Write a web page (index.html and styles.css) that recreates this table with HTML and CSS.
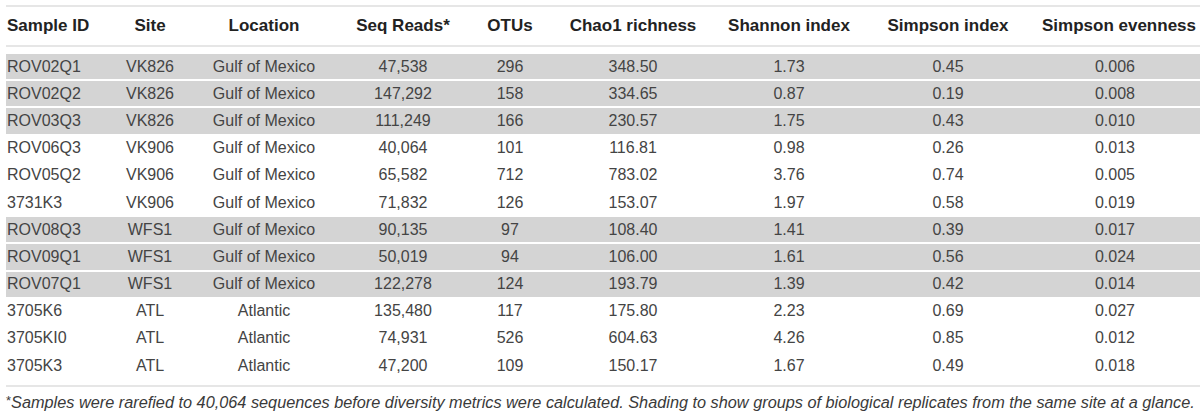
FILE: index.html
```html
<!DOCTYPE html>
<html lang="en">
<head>
<meta charset="utf-8">
<title>Diversity metrics</title>
<link rel="stylesheet" href="styles.css">
</head>
<body>
<table class="data">
  <colgroup>
    <col class="c1"><col class="c2"><col class="c3"><col class="c4"><col class="c5"><col class="c6"><col class="c7"><col class="c8"><col class="c9">
  </colgroup>
  <thead>
    <tr>
      <th class="first">Sample ID</th>
      <th>Site</th>
      <th>Location</th>
      <th>Seq Reads*</th>
      <th>OTUs</th>
      <th>Chao1 richness</th>
      <th>Shannon index</th>
      <th>Simpson index</th>
      <th class="last">Simpson evenness</th>
    </tr>
  </thead>
  <tbody>
    <tr class="shade"><td class="first">ROV02Q1</td><td>VK826</td><td>Gulf of Mexico</td><td>47,538</td><td>296</td><td>348.50</td><td>1.73</td><td>0.45</td><td class="last">0.006</td></tr>
    <tr class="shade"><td class="first">ROV02Q2</td><td>VK826</td><td>Gulf of Mexico</td><td>147,292</td><td>158</td><td>334.65</td><td>0.87</td><td>0.19</td><td class="last">0.008</td></tr>
    <tr class="shade"><td class="first">ROV03Q3</td><td>VK826</td><td>Gulf of Mexico</td><td>111,249</td><td>166</td><td>230.57</td><td>1.75</td><td>0.43</td><td class="last">0.010</td></tr>
    <tr><td class="first">ROV06Q3</td><td>VK906</td><td>Gulf of Mexico</td><td>40,064</td><td>101</td><td>116.81</td><td>0.98</td><td>0.26</td><td class="last">0.013</td></tr>
    <tr><td class="first">ROV05Q2</td><td>VK906</td><td>Gulf of Mexico</td><td>65,582</td><td>712</td><td>783.02</td><td>3.76</td><td>0.74</td><td class="last">0.005</td></tr>
    <tr><td class="first">3731K3</td><td>VK906</td><td>Gulf of Mexico</td><td>71,832</td><td>126</td><td>153.07</td><td>1.97</td><td>0.58</td><td class="last">0.019</td></tr>
    <tr class="shade"><td class="first">ROV08Q3</td><td>WFS1</td><td>Gulf of Mexico</td><td>90,135</td><td>97</td><td>108.40</td><td>1.41</td><td>0.39</td><td class="last">0.017</td></tr>
    <tr class="shade"><td class="first">ROV09Q1</td><td>WFS1</td><td>Gulf of Mexico</td><td>50,019</td><td>94</td><td>106.00</td><td>1.61</td><td>0.56</td><td class="last">0.024</td></tr>
    <tr class="shade"><td class="first">ROV07Q1</td><td>WFS1</td><td>Gulf of Mexico</td><td>122,278</td><td>124</td><td>193.79</td><td>1.39</td><td>0.42</td><td class="last">0.014</td></tr>
    <tr><td class="first">3705K6</td><td>ATL</td><td>Atlantic</td><td>135,480</td><td>117</td><td>175.80</td><td>2.23</td><td>0.69</td><td class="last">0.027</td></tr>
    <tr><td class="first">3705KI0</td><td>ATL</td><td>Atlantic</td><td>74,931</td><td>526</td><td>604.63</td><td>4.26</td><td>0.85</td><td class="last">0.012</td></tr>
    <tr><td class="first">3705K3</td><td>ATL</td><td>Atlantic</td><td>47,200</td><td>109</td><td>150.17</td><td>1.67</td><td>0.49</td><td class="last">0.018</td></tr>
  </tbody>
  <tfoot>
    <tr>
      <td colspan="9" class="note"><span class="ast">*</span>Samples were rarefied to 40,064 sequences before diversity metrics were calculated. Shading to show groups of biological replicates from the same site at a glance.</td>
    </tr>
  </tfoot>
</table>
</body>
</html>
```

FILE: styles.css
```css
html, body {
  margin: 0;
  padding: 0;
  background: #ffffff;
}

body {
  font-family: "Liberation Sans", Arial, sans-serif;
  color: #444444;
}

.data {
  margin: 5px 0 0 6px;
  width: 1194px;
  table-layout: fixed;
  border-collapse: separate;
  border-spacing: 0;
}

.c1 { width: 94px; }
.c2 { width: 100px; }
.c3 { width: 128px; }
.c4 { width: 150px; }
.c5 { width: 64px; }
.c6 { width: 182px; }
.c7 { width: 130px; }
.c8 { width: 188px; }
.c9 { width: 158px; }

.data th {
  height: 38px;
  padding: 0;
  font-size: 17px;
  font-weight: bold;
  color: #222222;
  text-align: center;
  vertical-align: middle;
  white-space: nowrap;
  border-top: 2px solid #e6e6e6;
  border-bottom: 2px solid #e6e6e6;
}

.data th.last {
  padding-right: 14px;
}

.data td {
  height: 25.2px;
  padding: 0;
  font-size: 16px;
  line-height: 20px;
  text-align: center;
  vertical-align: middle;
  white-space: nowrap;
  border-bottom: 2px solid transparent;
  background-clip: padding-box;
}

.data .first {
  text-align: left;
  padding-left: 1px;
}

.data td.last {
  padding-right: 12px;
}

.data tbody tr:first-child td {
  border-top: 7px solid transparent;
}

.data tbody tr:last-child td {
  border-bottom: 7px solid transparent;
}

.data tr.shade td {
  background-color: #d4d4d4;
}

.data td.note {
  height: auto;
  text-align: left;
  padding: 5px 0 0 0;
  border-top: 2px solid #e6e6e6;
  border-bottom: 0;
  font-size: 16.3px;
  font-style: italic;
  color: #3a3a3a;
  white-space: nowrap;
}

.note .ast {
  font-style: normal;
  font-size: 13px;
  position: relative;
  top: -3px;
}
```
